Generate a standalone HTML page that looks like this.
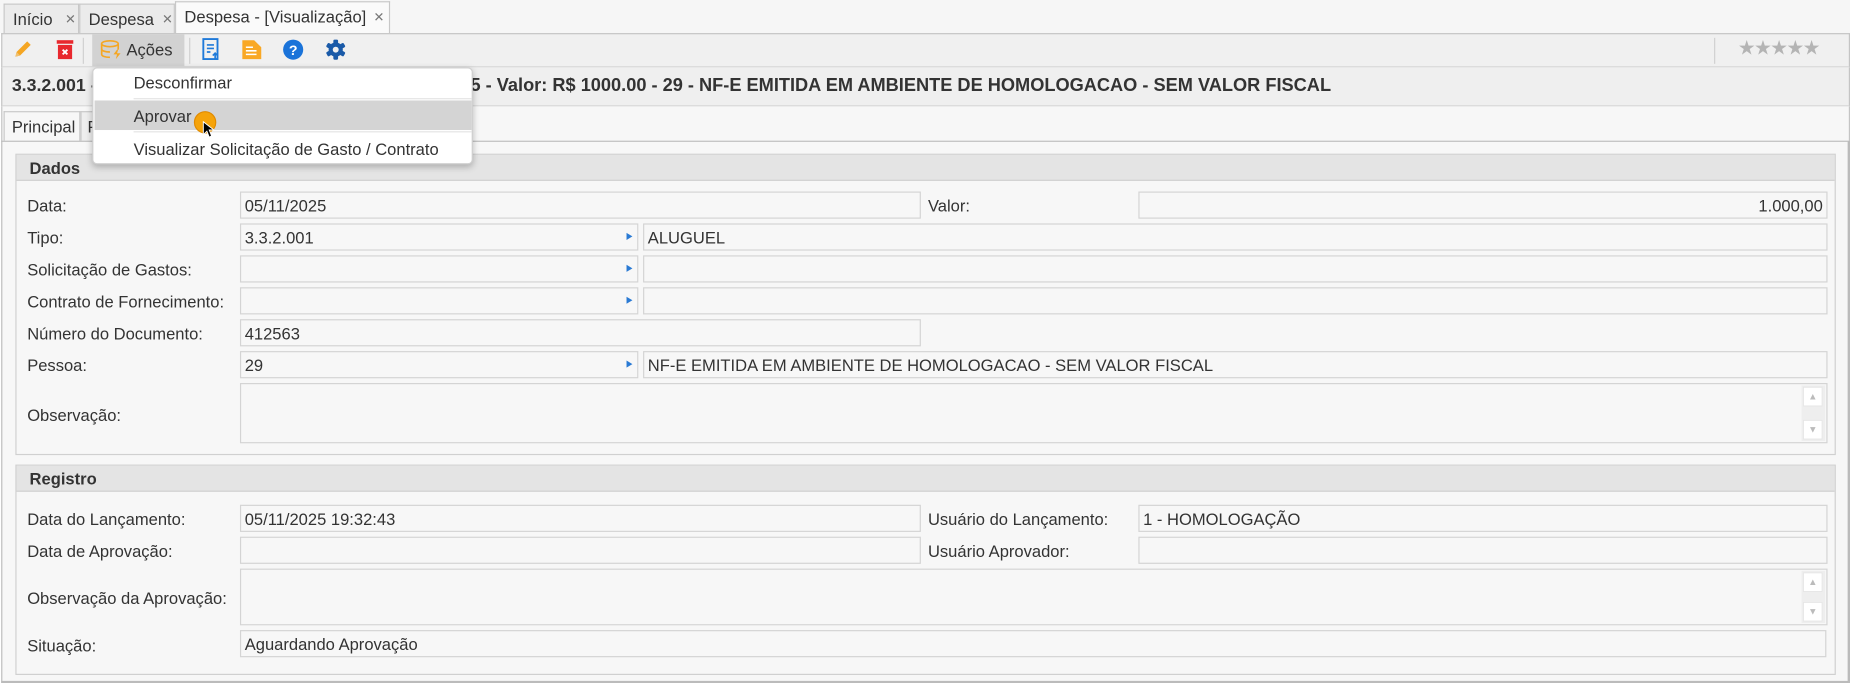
<!DOCTYPE html>
<html><head><meta charset="utf-8"><style>
html,body{margin:0;padding:0;background:#fff;width:1850px;height:683px;overflow:hidden}
#w{position:absolute;left:0;top:0;width:1565px;height:578px;transform:scale(1.18211);transform-origin:0 0;font-family:"Liberation Sans",sans-serif;font-size:14px;color:#333;background:#fff}
.a{position:absolute;box-sizing:border-box}
.tab{position:absolute;top:3px;height:25px;border:1px solid #c8c8c8;border-bottom:none;background:#ebebeb;box-sizing:border-box;padding:4px 0 0 7px;font-size:14px}
.tab .x{position:absolute;top:6px;font-size:11px;color:#777}
.lbl{position:absolute;left:23px;font-size:14px}
.in{position:absolute;height:23px;border:1px solid #d4d4d4;background:#f7f7f7;box-sizing:border-box;padding:3px 0 0 3px;font-size:14px;white-space:nowrap}
.arr{position:absolute;right:4px;top:7px;width:0;height:0;border-left:5px solid #2a7ad4;border-top:3.5px solid transparent;border-bottom:3.5px solid transparent}
.grp{position:absolute;left:13px;width:1540px;border:1px solid #d0d0d0;background:#f7f7f7;box-sizing:border-box}
.gh{position:absolute;left:0;top:0;right:0;height:22px;background:#e4e4e4;border-bottom:1px solid #d0d0d0;font-weight:bold;font-size:14px;padding:3px 0 0 11px;box-sizing:border-box}
.sb{position:absolute;right:1px;top:1px;bottom:1px;width:20px;background:#eee}
.sb div{position:absolute;left:1px;width:17px;height:17px;background:#fff;border:1px solid #e6e6e6;box-sizing:border-box;color:#bbb;font-size:8px;text-align:center;line-height:15px}
.mi{position:absolute;left:34px;font-size:14px}
</style></head><body><div id="w">
<div class="a" style="left:0;top:0;width:1565px;height:28px;background:#f6f6f6"></div>
<div class="tab" style="left:3px;width:64px">Início<span class="x" style="left:51px">✕</span></div>
<div class="tab" style="left:67px;width:81px">Despesa<span class="x" style="left:69px">✕</span></div>
<div class="tab" style="left:148px;width:182px;top:1px;height:28px;background:#fafafa;padding-top:4px">Despesa - [Visualização]<span class="x" style="left:167px">✕</span></div>
<div class="a" style="left:1px;top:28px;width:1564px;height:29px;background:#f0f0f0;border:1px solid #c4c4c4;border-bottom:1px solid #d8d8d8"></div>
<svg class="a" style="left:10px;top:33px" width="18" height="18" viewBox="0 0 18 18"><path d="M3 15 L4 11 L13 2 L16 5 L7 14 Z" fill="#f5a623"/><path d="M3 15 L4 11 L7 14Z" fill="#f0c070"/></svg>
<svg class="a" style="left:47px;top:33px" width="16" height="18" viewBox="0 0 16 18"><rect x="1" y="1" width="14" height="3" fill="#e8282e"/><rect x="2" y="5" width="12" height="12" fill="#e8282e"/><path d="M6 9l4 4M10 9l-4 4" stroke="#fff" stroke-width="1.6"/></svg>
<div class="a" style="left:70px;top:32px;width:1px;height:22px;background:#d0d0d0"></div>
<div class="a" style="left:78px;top:29px;width:78px;height:27px;background:#d2d2d2"></div>
<svg class="a" style="left:84px;top:33px" width="20" height="18" viewBox="0 0 20 18"><ellipse cx="9" cy="4" rx="7" ry="2.5" fill="none" stroke="#f5a623" stroke-width="1.4"/><path d="M2 4v9c0 1.5 3 2.5 7 2.5M16 4v5M2 8.5c0 1.5 3 2.5 7 2.5" fill="none" stroke="#f5a623" stroke-width="1.4"/><path d="M15 9l-3 4h3l-1 4 4-5h-3l1-3z" fill="#f5a623"/></svg>
<div class="a" style="left:107px;top:34px;font-size:14px">Ações</div>
<div class="a" style="left:160px;top:32px;width:1px;height:22px;background:#d0d0d0"></div>
<svg class="a" style="left:170px;top:32px" width="16" height="20" viewBox="0 0 16 20"><path d="M2 1h12v17H2z" fill="none" stroke="#1f7ad9" stroke-width="1.6"/><path d="M5 6h6M5 9h6M5 12h3" stroke="#1f7ad9" stroke-width="1.4"/><path d="M12 18v-5M10 15l2-2 2 2" stroke="#1f7ad9" stroke-width="1.4" fill="none"/></svg>
<svg class="a" style="left:204px;top:33px" width="18" height="18" viewBox="0 0 18 18"><path d="M1 1h10l6 6v10H1z" fill="#f9a825"/><path d="M4 7h6M4 10h9M4 13h9" stroke="#fff" stroke-width="1.3"/></svg>
<svg class="a" style="left:239px;top:33px" width="18" height="18" viewBox="0 0 18 18"><circle cx="9" cy="9" r="8.5" fill="#1a73d9"/><text x="9" y="13.5" text-anchor="middle" font-family="Liberation Sans" font-weight="bold" font-size="12" fill="#fff">?</text></svg>
<svg class="a" style="left:275px;top:33px" width="18" height="18" viewBox="0 0 18 18"><g fill="#1a5aa8"><circle cx="9" cy="9" r="6"/><rect x="7" y="0.5" width="4" height="17" rx="1"/><rect x="7" y="0.5" width="4" height="17" rx="1" transform="rotate(60 9 9)"/><rect x="7" y="0.5" width="4" height="17" rx="1" transform="rotate(120 9 9)"/></g><circle cx="9" cy="9" r="2.5" fill="#f0f0f0"/></svg>
<div class="a" style="left:1450px;top:32px;width:1px;height:22px;background:#d0d0d0"></div>
<div class="a" style="left:1470px;top:31px;font-size:17px;color:#b4b4b4;letter-spacing:-1.5px">★★★★★</div>
<div class="a" style="left:1px;top:57px;width:1564px;height:33px;background:#efefef;border-left:1px solid #c4c4c4;border-right:1px solid #c4c4c4;border-bottom:1px solid #d8d8d8"></div>
<div class="a" style="left:10px;top:64px;font-weight:bold;font-size:15px;white-space:nowrap">3.3.2.001 - ALUGUEL</div>
<div class="a" style="left:398px;top:64px;font-weight:bold;font-size:15.4px;white-space:nowrap">5 - Valor: R$ 1000.00 - 29 - NF-E EMITIDA EM AMBIENTE DE HOMOLOGACAO - SEM VALOR FISCAL</div>
<div class="a" style="left:1px;top:90px;width:1564px;height:30px;background:#f7f7f7;border-left:1px solid #c4c4c4;border-right:1px solid #c4c4c4"></div>
<div class="a" style="left:3px;top:94px;width:65px;height:26px;background:#f7f7f7;border:1px solid #c8c8c8;border-bottom:none;padding:4px 0 0 6px;font-size:14px">Principal</div>
<div class="a" style="left:68px;top:94px;width:60px;height:26px;background:#eee;border:1px solid #c8c8c8;border-bottom:none;padding:4px 0 0 5px;font-size:14px">P</div>
<div class="a" style="left:1px;top:119px;width:1564px;height:459px;background:#f7f7f7;border:1px solid #bdbdbd;border-right:2px solid #bbb;border-bottom:2px solid #bbb"></div>

<div class="grp" style="top:130px;height:255px"><div class="gh">Dados</div></div>
<div class="lbl" style="top:166px">Data:</div>
<div class="in" style="left:203px;top:162px;width:576px">05/11/2025</div>
<div class="lbl" style="left:785px;top:166px">Valor:</div>
<div class="in" style="left:963px;top:162px;width:583px;text-align:right;padding-right:3px">1.000,00</div>
<div class="lbl" style="top:193px">Tipo:</div>
<div class="in" style="left:203px;top:189px;width:337px">3.3.2.001<div class="arr"></div></div>
<div class="in" style="left:544px;top:189px;width:1002px">ALUGUEL</div>
<div class="lbl" style="top:220px">Solicitação de Gastos:</div>
<div class="in" style="left:203px;top:216px;width:337px"><div class="arr"></div></div>
<div class="in" style="left:544px;top:216px;width:1002px"></div>
<div class="lbl" style="top:247px">Contrato de Fornecimento:</div>
<div class="in" style="left:203px;top:243px;width:337px"><div class="arr"></div></div>
<div class="in" style="left:544px;top:243px;width:1002px"></div>
<div class="lbl" style="top:274px">Número do Documento:</div>
<div class="in" style="left:203px;top:270px;width:576px">412563</div>
<div class="lbl" style="top:301px">Pessoa:</div>
<div class="in" style="left:203px;top:297px;width:337px">29<div class="arr"></div></div>
<div class="in" style="left:544px;top:297px;width:1002px">NF-E EMITIDA EM AMBIENTE DE HOMOLOGACAO - SEM VALOR FISCAL</div>
<div class="lbl" style="top:343px">Observação:</div>
<div class="in" style="left:203px;top:324px;width:1343px;height:51px"><div class="sb"><div style="top:1px">▲</div><div style="bottom:1px">▼</div></div></div>

<div class="grp" style="top:393px;height:178px"><div class="gh">Registro</div></div>
<div class="lbl" style="top:431px">Data do Lançamento:</div>
<div class="in" style="left:203px;top:427px;width:576px">05/11/2025 19:32:43</div>
<div class="lbl" style="left:785px;top:431px">Usuário do Lançamento:</div>
<div class="in" style="left:963px;top:427px;width:583px">1 - HOMOLOGAÇÃO</div>
<div class="lbl" style="top:458px">Data de Aprovação:</div>
<div class="in" style="left:203px;top:454px;width:576px"></div>
<div class="lbl" style="left:785px;top:458px">Usuário Aprovador:</div>
<div class="in" style="left:963px;top:454px;width:583px"></div>
<div class="lbl" style="top:498px">Observação da Aprovação:</div>
<div class="in" style="left:203px;top:481px;width:1343px;height:48px"><div class="sb"><div style="top:1px">▲</div><div style="bottom:1px">▼</div></div></div>
<div class="lbl" style="top:538px">Situação:</div>
<div class="in" style="left:203px;top:533px;width:1342px">Aguardando Aprovação</div>

<div class="a" style="left:78px;top:57px;width:322px;height:82px;background:#fff;border:1px solid #d0d0d0;border-radius:4px;box-shadow:0 2px 6px rgba(0,0,0,.25)">
<div class="mi" style="top:4px">Desconfirmar</div>
<div class="a" style="left:34px;top:25px;width:286px;height:1px;background:#e4e4e4"></div>
<div class="a" style="left:1px;top:27px;width:319px;height:25px;background:#d4d4d4"></div>
<div class="mi" style="top:32px">Aprovar</div>
<div class="a" style="left:34px;top:53px;width:286px;height:1px;background:#e4e4e4"></div>
<div class="mi" style="top:60px">Visualizar Solicitação de Gasto / Contrato</div>
</div>
<div class="a" style="left:164px;top:94px;width:19px;height:19px;border-radius:50%;background:#f5a30a;border:1px solid #e08a00"></div>
<svg class="a" style="left:171px;top:102px" width="10" height="15" viewBox="0 0 10 15"><path d="M1 1v11l3-3 2 5 2-1-2-5h4z" fill="#000" stroke="#fff" stroke-width="0.8"/></svg>
</div></body></html>
